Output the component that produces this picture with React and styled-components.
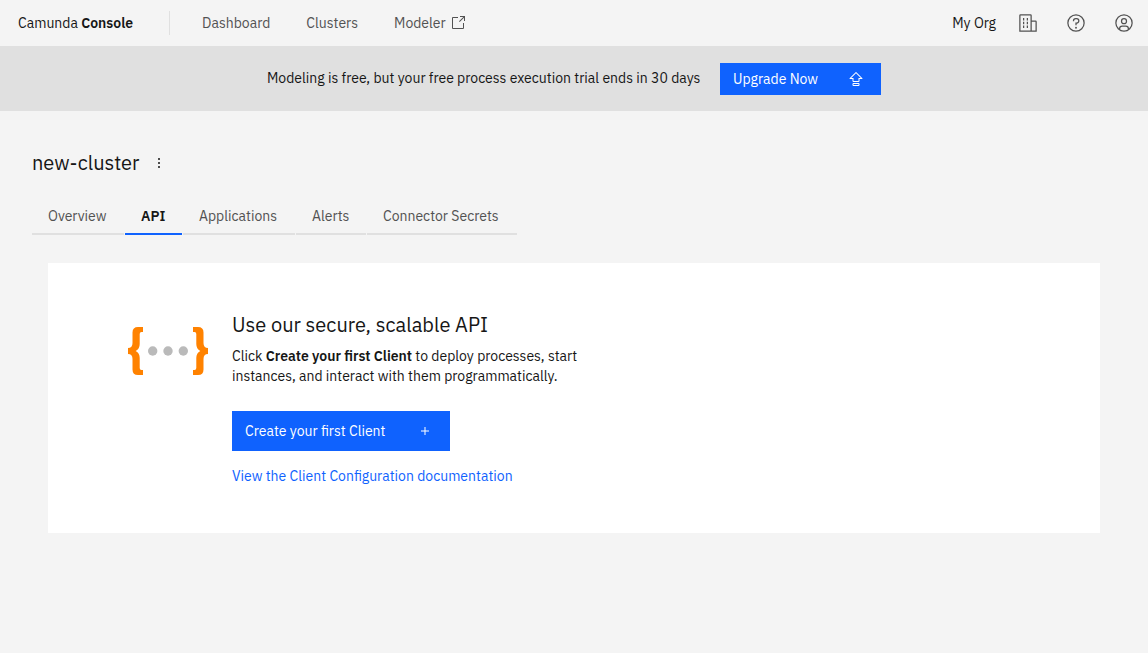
import React from "react";
import styled, { createGlobalStyle } from "styled-components";

const GlobalStyle = createGlobalStyle`
  *, *::before, *::after { box-sizing: border-box; }
  body {
    margin: 0;
    min-height: 100vh;
    background: #f4f4f4;
    color: #161616;
    font-family: "IBM Plex Sans", Roboto, "Liberation Sans", sans-serif;
    font-size: 14px;
    line-height: 20px;
  }
  button { font: inherit; }
  h1, h2, p { margin: 0; font-weight: 400; }
  strong { font-weight: 600; }
`;

const Header = styled.header`
  display: flex;
  align-items: center;
  height: 47px;
  border-bottom: 1px solid #e0e0e0;
`;

const Brand = styled.a`
  padding: 0 36px 0 18px;
  color: #161616;
  text-decoration: none;
  white-space: nowrap;
`;

const Nav = styled.nav`
  display: flex;
  align-items: center;
  height: 24px;
  padding-left: 14px;
  border-left: 1px solid #e0e0e0;
`;

const NavLink = styled.a`
  display: flex;
  align-items: center;
  gap: 4px;
  padding: 0 18px;
  color: #525252;
  text-decoration: none;
`;

const HeaderActions = styled.div`
  display: flex;
  align-items: center;
  margin-left: auto;
`;

const OrgName = styled.span`
  padding-right: 8px;
`;

const IconButton = styled.button`
  display: flex;
  align-items: center;
  justify-content: center;
  width: ${(p) => p.$size}px;
  height: ${(p) => p.$size}px;
  padding: 0;
  border: 0;
  background: transparent;
  color: ${(p) => p.$color || "#525252"};
  cursor: pointer;
`;

const Banner = styled.div`
  display: flex;
  align-items: center;
  justify-content: center;
  gap: 8px;
  height: 64px;
  background: #e0e0e0;
`;

const BannerText = styled.p`
  min-width: 445px;
  padding-bottom: 2px;
`;

const PrimaryButton = styled.button`
  display: inline-flex;
  align-items: center;
  justify-content: space-between;
  min-width: ${(p) => p.$minWidth}px;
  height: ${(p) => p.$height}px;
  padding: 0 16px 0 12px;
  border: 1px solid #0f62fe;
  background: #0f62fe;
  color: #fff;
  cursor: pointer;
`;

const Main = styled.main`
  padding: 32px;
`;

const TitleRow = styled.div`
  display: flex;
  align-items: center;
  gap: 4px;
  height: 40px;
`;

const Title = styled.h1`
  font-size: 20px;
  line-height: 28px;
`;

const Tabs = styled.div`
  display: flex;
  gap: 1px;
  margin-top: 12px;
`;

const Tab = styled.button`
  min-width: ${(p) => p.$minWidth}px;
  height: 40px;
  padding: 4px 16px 0;
  border: 0;
  border-bottom: 2px solid ${(p) => (p.$active ? "#0f62fe" : "#e0e0e0")};
  background: transparent;
  color: ${(p) => (p.$active ? "#161616" : "#525252")};
  font-weight: ${(p) => (p.$active ? 600 : 400)};
  text-align: left;
  white-space: nowrap;
  cursor: pointer;
`;

const Card = styled.section`
  display: flex;
  gap: 24px;
  margin: 28px 16px 0;
  padding: 48px 80px 47px;
  background: #fff;
`;

const Illustration = styled.svg`
  flex: none;
  margin-top: 16px;
`;

const CardBody = styled.div`
  display: flex;
  flex-direction: column;
  align-items: flex-start;
`;

const CardTitle = styled.h2`
  font-size: 20px;
  line-height: 28px;
`;

const CardText = styled.p`
  margin: 7px 0 25px;
`;

const DocLink = styled.a`
  margin-top: 15px;
  color: #0f62fe;
  text-decoration: none;
`;

const Icon = ({ size = 16, children }) => (
  <svg width={size} height={size} viewBox="0 0 32 32" fill="currentColor" aria-hidden="true">
    {children}
  </svg>
);

const LaunchIcon = () => (
  <Icon>
    <path d="M26,28H6a2,2,0,0,1-2-2V6A2,2,0,0,1,6,4H16V6H6V26H26V16h2V26A2,2,0,0,1,26,28Z" />
    <path d="M20 2 20 4 26.586 4 18 12.586 19.414 14 28 5.414 28 12 30 12 30 2Z" />
  </Icon>
);

const EnterpriseIcon = () => (
  <Icon size={20}>
    <path d="M8 8h2v4H8zM8 14h2v4H8zM14 8h2v4h-2zM14 14h2v4h-2zM8 20h2v4H8zM14 20h2v4h-2z" />
    <path d="M30,14a2,2,0,0,0-2-2H22V4a2,2,0,0,0-2-2H4A2,2,0,0,0,2,4V30H30ZM4,4H20V28H4ZM22,28V14h6V28Z" />
  </Icon>
);

const HelpIcon = () => (
  <Icon size={20}>
    <path d="M16,2A14,14,0,1,0,30,16,14,14,0,0,0,16,2Zm0,26A12,12,0,1,1,28,16,12,12,0,0,1,16,28Z" />
    <circle cx="16" cy="23.5" r="1.5" />
    <path d="M17,8H15.5A4.49,4.49,0,0,0,11,12.5V13h2v-.5A2.5,2.5,0,0,1,15.5,10H17a2.5,2.5,0,0,1,0,5H15v4.5h2V17a4.5,4.5,0,0,0,0-9Z" />
  </Icon>
);

const UserIcon = () => (
  <Icon size={20}>
    <path d="M16,8a5,5,0,1,0,5,5A5,5,0,0,0,16,8Zm0,8a3,3,0,1,1,3-3A3,3,0,0,1,16,16Z" />
    <path d="M16,2A14,14,0,1,0,30,16,14,14,0,0,0,16,2ZM10,26.377V25a3,3,0,0,1,3-3h6a3,3,0,0,1,3,3v1.377a11.9,11.9,0,0,1-12,0Zm13.993-1.451A5,5,0,0,0,19,20H13a5,5,0,0,0-4.992,4.926,12,12,0,1,1,15.985,0Z" />
  </Icon>
);

const UpgradeIcon = () => (
  <Icon>
    <path d="M21,24H11a2,2,0,0,0-2,2v2a2,2,0,0,0,2,2H21a2,2,0,0,0,2-2V26A2,2,0,0,0,21,24Zm0,4H11V26H21Z" />
    <path d="M28.707,14.293l-12-12a1,1,0,0,0-1.414,0l-12,12A1,1,0,0,0,4,16H9v4a2,2,0,0,0,2,2H21a2,2,0,0,0,2-2V16h5a1,1,0,0,0,.707-1.707ZM21,14v6H11V14H6.414L16,4.414,25.586,14Z" />
  </Icon>
);

const AddIcon = () => (
  <Icon>
    <path d="M17 15 17 8 15 8 15 15 8 15 8 17 15 17 15 24 17 24 17 17 24 17 24 15Z" />
  </Icon>
);

const OverflowIcon = () => (
  <Icon>
    <circle cx="16" cy="8" r="2" />
    <circle cx="16" cy="16" r="2" />
    <circle cx="16" cy="24" r="2" />
  </Icon>
);

const BracesIllustration = () => (
  <Illustration width="80" height="48" viewBox="0 0 80 48" aria-hidden="true">
    <g fill="#ff8200">
      <path id="brace" d="M15 0v5h-1.500q-1.800 0-1.800 2v10q0 5-4 7q4 2 4 7v10q0 2 1.800 2h1.500v5h-5q-5.500 0-5.500-5.500v-10.500q0-5-4.500-5v-6q4.500 0 4.500-5v-10.500q0-5.500 5.500-5.500z" />
      <use href="#brace" transform="translate(80 0) scale(-1 1)" />
    </g>
    <g fill="#bababa">
      <circle cx="24.700" cy="24" r="4.700" />
      <circle cx="40" cy="24" r="4.700" />
      <circle cx="55.300" cy="24" r="4.700" />
    </g>
  </Illustration>
);

const tabs = [
  { name: "Overview", minWidth: 92 },
  { name: "API", minWidth: 57 },
  { name: "Applications", minWidth: 112 },
  { name: "Alerts", minWidth: 70 },
  { name: "Connector Secrets", minWidth: 150 },
];

export default function App() {
  return (
    <>
      <GlobalStyle />
      <Header>
        <Brand href="#">
          Camunda <strong>Console</strong>
        </Brand>
        <Nav>
          <NavLink href="#dashboard">Dashboard</NavLink>
          <NavLink href="#clusters">Clusters</NavLink>
          <NavLink href="#modeler">
            Modeler
            <LaunchIcon />
          </NavLink>
        </Nav>
        <HeaderActions>
          <OrgName>My Org</OrgName>
          <IconButton $size={48} aria-label="Organization"><EnterpriseIcon /></IconButton>
          <IconButton $size={48} aria-label="Help"><HelpIcon /></IconButton>
          <IconButton $size={48} aria-label="Account"><UserIcon /></IconButton>
        </HeaderActions>
      </Header>
      <Banner>
        <BannerText>Modeling is free, but your free process execution trial ends in 30 days</BannerText>
        <PrimaryButton $minWidth={161} $height={32}>
          Upgrade Now
          <UpgradeIcon />
        </PrimaryButton>
      </Banner>
      <Main>
        <TitleRow>
          <Title>new-cluster</Title>
          <IconButton $size={32} $color="#161616" aria-label="Cluster options"><OverflowIcon /></IconButton>
        </TitleRow>
        <Tabs role="tablist">
          {tabs.map(({ name, minWidth }) => (
            <Tab
              key={name}
              role="tab"
              aria-selected={name === "API"}
              $active={name === "API"}
              $minWidth={minWidth}
            >
              {name}
            </Tab>
          ))}
        </Tabs>
        <Card>
          <BracesIllustration />
          <CardBody>
            <CardTitle>Use our secure, scalable API</CardTitle>
            <CardText>
              Click <strong>Create your first Client</strong> to deploy processes, start
              <br />
              instances, and interact with them programmatically.
            </CardText>
            <PrimaryButton $minWidth={218} $height={40}>
              Create your first Client
              <AddIcon />
            </PrimaryButton>
            <DocLink href="#docs">View the Client Configuration documentation</DocLink>
          </CardBody>
        </Card>
      </Main>
    </>
  );
}
